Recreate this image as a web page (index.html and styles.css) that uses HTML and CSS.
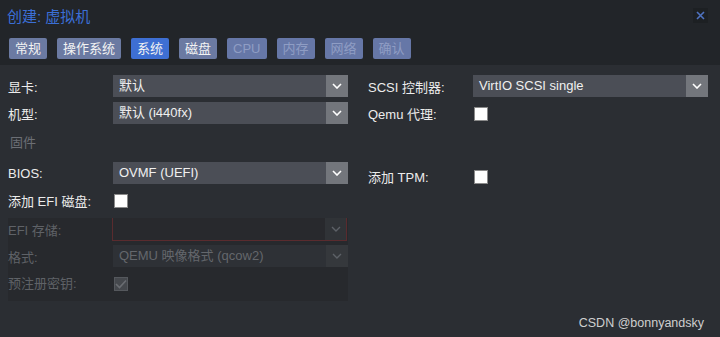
FILE: index.html
```html
<!DOCTYPE html>
<html lang="zh">
<head>
<meta charset="utf-8">
<link rel="stylesheet" href="styles.css">
</head>
<body>
<div class="window">
  <div class="header">
    <div class="titlebar">
      <span class="title">创建: 虚拟机</span>
      <span class="close">
        <svg width="9" height="9" viewBox="0 0 9 9"><path d="M1 1L8 8M8 1L1 8" stroke="#4f72c0" stroke-width="1.6"/></svg>
      </span>
    </div>
    <div class="tabs">
      <span class="tab">常规</span>
      <span class="tab">操作系统</span>
      <span class="tab active">系统</span>
      <span class="tab">磁盘</span>
      <span class="tab disabled">CPU</span>
      <span class="tab disabled">内存</span>
      <span class="tab disabled">网络</span>
      <span class="tab disabled">确认</span>
    </div>
  </div>
  <div class="content">
    <div class="col">
      <div class="row"><span class="label">显卡:</span><div class="select"><span class="val">默认</span><span class="arrow"><svg width="10" height="6" viewBox="0 0 10 6"><path d="M1 1L5 5L9 1" fill="none" stroke="#fff" stroke-width="1.6"/></svg></span></div></div>
      <div class="row"><span class="label">机型:</span><div class="select"><span class="val">默认 (i440fx)</span><span class="arrow"><svg width="10" height="6" viewBox="0 0 10 6"><path d="M1 1L5 5L9 1" fill="none" stroke="#fff" stroke-width="1.6"/></svg></span></div></div>
      <div class="section">固件</div>
      <div class="row"><span class="label">BIOS:</span><div class="select"><span class="val">OVMF (UEFI)</span><span class="arrow"><svg width="10" height="6" viewBox="0 0 10 6"><path d="M1 1L5 5L9 1" fill="none" stroke="#fff" stroke-width="1.6"/></svg></span></div></div>
      <div class="row"><span class="label">添加 EFI 磁盘:</span><span class="check"></span></div>
      <div class="disabled-area">
        <div class="row tall"><span class="label">EFI 存储:</span><div class="select invalid"><span class="val"></span><span class="arrow"><svg width="10" height="6" viewBox="0 0 10 6"><path d="M1 1L5 5L9 1" fill="none" stroke="#5d6167" stroke-width="1.4"/></svg></span></div></div>
        <div class="row"><span class="label">格式:</span><div class="select"><span class="val">QEMU 映像格式 (qcow2)</span><span class="arrow"><svg width="10" height="6" viewBox="0 0 10 6"><path d="M1 1L5 5L9 1" fill="none" stroke="#5d6167" stroke-width="1.4"/></svg></span></div></div>
        <div class="row"><span class="label">预注册密钥:</span><span class="check checked"><svg width="12" height="10" viewBox="0 0 12 10"><path d="M1 5L4.5 8.5L11 1.5" fill="none" stroke="#6a6d72" stroke-width="1.6"/></svg></span></div>
      </div>
    </div>
    <div class="col">
      <div class="row"><span class="label">SCSI 控制器:</span><div class="select"><span class="val">VirtIO SCSI single</span><span class="arrow"><svg width="10" height="6" viewBox="0 0 10 6"><path d="M1 1L5 5L9 1" fill="none" stroke="#fff" stroke-width="1.6"/></svg></span></div></div>
      <div class="row"><span class="label">Qemu 代理:</span><span class="check"></span></div>
      <div class="spacer"></div>
      <div class="row"><span class="label">添加 TPM:</span><span class="check"></span></div>
    </div>
  </div>
  <div class="watermark">CSDN @bonnyandsky</div>
</div>
</body>
</html>
```
FILE: styles.css
```css
* { box-sizing: border-box; }
html, body { margin: 0; padding: 0; }
body {
  background: #2b2e33;
  font-family: "Liberation Sans", "Noto Sans CJK SC", sans-serif;
  font-size: 13px;
  color: #e8e8e8;
}
.window {
  position: relative;
  width: 720px;
  height: 337px;
  background: #2b2e33;
  overflow: hidden;
}
.header {
  background: #222529;
  height: 65px;
  padding: 0 0 0 9px;
}
.titlebar {
  display: flex;
  align-items: center;
  justify-content: space-between;
  height: 30px;
  padding-right: 12px;
}
.title {
  color: #3b6fd6;
  font-size: 15px;
  margin-left: -2px;
}
.close {
  width: 15px;
  height: 15px;
  background: #1d2023;
  display: flex;
  align-items: center;
  justify-content: center;
}
.tabs {
  display: flex;
  gap: 10px;
  margin-top: 8px;
}
.tab {
  height: 21px;
  line-height: 21px;
  padding: 0 6px;
  border-radius: 2px;
  background: #6b7aa2;
  color: #f2f2f2;
  font-size: 13px;
}
.tab.active { background: #3e6fd3; }
.tab.disabled { background: #6677a7; color: #8f9dc4; }
.content {
  display: flex;
  gap: 20px;
  padding: 10px 12px 0 8px;
}
.col {
  width: 340px;
  display: flex;
  flex-direction: column;
}
.row {
  display: flex;
  align-items: center;
  height: 22px;
  margin-bottom: 5px;
}
.label {
  width: 105px;
  flex: none;
  color: #ececec;
  white-space: nowrap;
}
.select {
  width: 235px;
  height: 22px;
  display: flex;
  background: #4b4e56;
}
.select .val {
  flex: 1;
  padding-left: 6px;
  line-height: 22px;
  color: #f0f0f0;
}
.select .arrow {
  width: 22px;
  background: #73767c;
  display: flex;
  align-items: center;
  justify-content: center;
}
.check {
  width: 14px;
  height: 14px;
  background: #ffffff;
  border: 1px solid #8a8a8a;
  margin-left: 1px;
  margin-top: 1px;
}
.section {
  height: 28px;
  padding-top: 4px;
  margin-bottom: 5px;
  padding-left: 2px;
  line-height: 20px;
  color: #6c6f75;
}
.spacer { height: 36px; }
.disabled-area {
  background: #27292d;
  margin-top: 2px;
  padding-bottom: 4px;
}
.disabled-area .row { margin-bottom: 4px; height: 22px; }
.disabled-area .row.tall { height: 23px; }
.disabled-area .label { color: #5f6267; }
.disabled-area .select { background: #2e3136; }
.disabled-area .select .val { color: #64676c; }
.disabled-area .select .arrow { background: #35383c; }
.disabled-area .select.invalid {
  height: 23px;
  border: 1px solid #5a2b2e;
  border-top: none;
  background: #28292d;
  margin-left: -1px;
}
.disabled-area .select.invalid .arrow { background: #303337; width: 21px; }
.disabled-area .check.checked {
  background: #45484d;
  border-color: #55585d;
  display: flex;
  align-items: center;
  justify-content: center;
  margin-top: 4px;
}
.watermark {
  position: absolute;
  right: 16px;
  bottom: 7px;
  font-size: 12.5px;
  color: #cfcfcf;
  font-family: "Liberation Sans", sans-serif;
}
```
